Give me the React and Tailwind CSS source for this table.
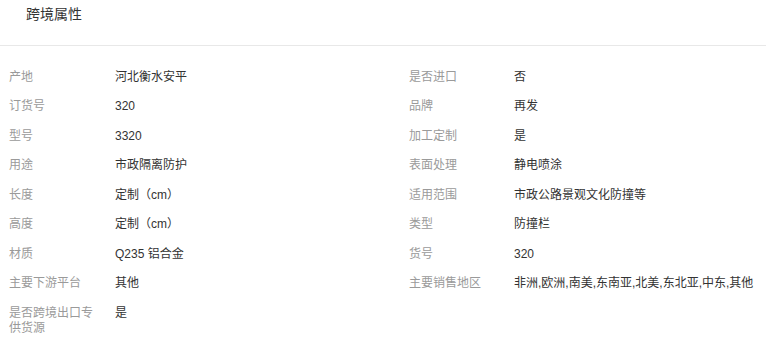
import React from "react";

const rows = [
  ["产地", "河北衡水安平", "是否进口", "否"],
  ["订货号", "320", "品牌", "再发"],
  ["型号", "3320", "加工定制", "是"],
  ["用途", "市政隔离防护", "表面处理", "静电喷涂"],
  ["长度", "定制（cm）", "适用范围", "市政公路景观文化防撞等"],
  ["高度", "定制（cm）", "类型", "防撞栏"],
  ["材质", "Q235 铝合金", "货号", "320"],
  ["主要下游平台", "其他", "主要销售地区", "非洲,欧洲,南美,东南亚,北美,东北亚,中东,其他"],
  ["是否跨境出口专供货源", "是", null, null],
];

const Cell = ({ label, value, right }) => (
  <div className="flex items-start pl-[9px] py-[7px]">
    <div
      className={`${right ? "w-[105px]" : "w-[106px]"} shrink-0 pr-[12px] text-[#9a9a9a] leading-[15.5px]`}
    >
      {label}
    </div>
    <div className="text-[#333333] leading-[15.5px] whitespace-nowrap">{value}</div>
  </div>
);

const App = () => {
  return (
    <div
      className="w-[766px] h-[338px] bg-white overflow-hidden"
      style={{ fontFamily: '"Liberation Sans", "Noto Sans CJK SC", sans-serif' }}
    >
      <div className="h-[46px] border-b border-[#e8e8e8] pl-[26px] pt-[4px]">
        <h2 className="text-[14px] leading-[20px] text-[#333333]">跨境属性</h2>
      </div>
      <div className="pt-[16.5px] grid grid-cols-[400px_1fr] text-[12px]">
        {rows.map(([l1, v1, l2, v2], i) => (
          <React.Fragment key={i}>
            <Cell label={l1} value={v1} />
            {l2 ? <Cell label={l2} value={v2} right /> : <div />}
          </React.Fragment>
        ))}
      </div>
    </div>
  );
};

export default App;
